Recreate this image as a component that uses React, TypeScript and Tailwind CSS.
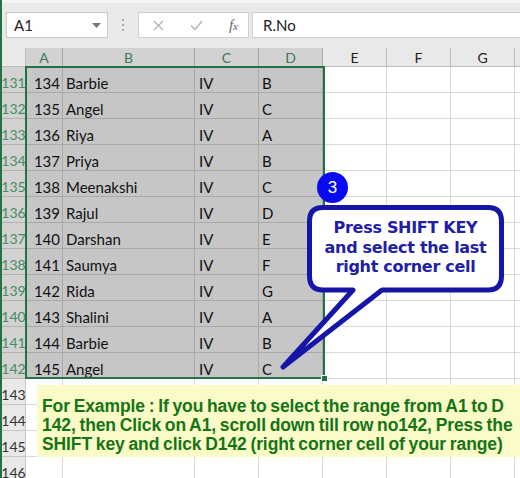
import React from "react";

const rows: [number, string, string, string, string][] = [
  [131, "134", "Barbie", "IV", "B"],
  [132, "135", "Angel", "IV", "C"],
  [133, "136", "Riya", "IV", "A"],
  [134, "137", "Priya", "IV", "B"],
  [135, "138", "Meenakshi", "IV", "C"],
  [136, "139", "Rajul", "IV", "D"],
  [137, "140", "Darshan", "IV", "E"],
  [138, "141", "Saumya", "IV", "F"],
  [139, "142", "Rida", "IV", "G"],
  [140, "143", "Shalini", "IV", "A"],
  [141, "144", "Barbie", "IV", "B"],
  [142, "145", "Angel", "IV", "C"],
  [143, "", "", "", ""],
  [144, "", "", "", ""],
  [145, "", "", "", ""],
  [146, "", "", "", ""],
];

const cols = ["A", "B", "C", "D", "E", "F", "G"];

function FormulaBar() {
  return (
    <div className="h-[48px] bg-[#e9e9e9] border-t-[3px] border-[#f4f4f4] flex items-start pt-[9px] pl-[4px]">
      {/* name box */}
      <div className="w-[102px] h-[26px] bg-white border border-[#c8c8c8] flex items-center justify-between pl-[7px] pr-[6px] text-[15px] text-[#222]">
        <span>A1</span>
        <svg width="9" height="5" viewBox="0 0 9 5">
          <path d="M0 0 H9 L4.5 5 Z" fill="#777" />
        </svg>
      </div>
      {/* grip dots */}
      <div className="w-[30px] h-[26px] flex flex-col items-center justify-center gap-[3px]">
        <span className="w-[2px] h-[2px] bg-[#aaa]" />
        <span className="w-[2px] h-[2px] bg-[#aaa]" />
        <span className="w-[2px] h-[2px] bg-[#aaa]" />
      </div>
      {/* cancel / enter / fx */}
      <div className="w-[111px] h-[26px] bg-white border border-[#d0d0d0] flex items-center pl-[14px] pr-[10px] justify-between">
        <svg width="11" height="11" viewBox="0 0 11 11">
          <path d="M1 1 L10 10 M10 1 L1 10" stroke="#b4b4b4" strokeWidth="1.3" />
        </svg>
        <svg width="13" height="11" viewBox="0 0 13 11">
          <path d="M1 5.5 L5 9.5 L12 1" stroke="#b4b4b4" strokeWidth="1.4" fill="none" />
        </svg>
        <span className="text-[15px] italic text-[#666] font-['Liberation_Serif',serif] leading-none">
          f<span className="text-[11px]">x</span>
        </span>
      </div>
      {/* formula input */}
      <div className="flex-1 ml-[3px] h-[26px] bg-white border border-[#d0d0d0] border-r-0 flex items-center pl-[10px] text-[15px] text-[#222]">
        R.No
      </div>
    </div>
  );
}

export default function App() {
  return (
    <div className="w-[520px] h-[478px] overflow-hidden relative border-l-2 border-[#217346] bg-white font-['Lato',sans-serif]">
      <FormulaBar />
      <div className="grid grid-cols-[24px_37px_132px_64px_64px_64px_64px_64px_1fr]">
        {/* header row */}
        <div className="h-[19px] bg-[#e9e9e9] border-r border-b border-[#bdbdbd]" />
        {cols.map((c, i) => (
          <div
            key={c}
            className={
              i < 4
                ? "h-[19px] bg-[#d2d2d2] text-[#3c7a55] border-r border-b border-[#a8a8a8] flex items-center justify-center text-[14px]"
                : "h-[19px] bg-[#e9e9e9] text-[#222] border-r border-b border-[#bdbdbd] flex items-center justify-center text-[14px]"
            }
          >
            {c}
          </div>
        ))}
        <div className="h-[19px] bg-[#e9e9e9] border-b border-[#bdbdbd]" />

        {rows.map(([n, a, b, c, d]) => {
          const sel = n <= 142;
          const cell = sel
            ? "h-[26px] bg-[#c6c6c6] border-r border-b border-[#a9a9a9] flex items-end pb-[1px] leading-[16px] text-[15px] text-[#111]"
            : "h-[26px] bg-white border-r border-b border-[#d9d9d9] flex items-end pb-[1px] leading-[16px] text-[15px] text-[#111]";
          const blank = "h-[26px] bg-white border-r border-b border-[#d9d9d9]";
          return (
            <React.Fragment key={n}>
              <div
                className={
                  sel
                    ? "h-[26px] bg-[#d2d2d2] text-[#4b8a63] border-r border-b border-[#b3b3b3] flex items-end pb-[1px] leading-[16px] justify-center text-[14px]"
                    : "h-[26px] bg-[#e9e9e9] text-[#333] border-r border-b border-[#c8c8c8] flex items-end pb-[1px] leading-[16px] justify-center text-[14px]"
                }
              >
                {n}
              </div>
              <div className={cell + " justify-end pr-[2px]"}>{a}</div>
              <div className={cell + " pl-[3px]"}>{b}</div>
              <div className={cell + " pl-[4px]"}>{c}</div>
              <div className={cell + " pl-[3px]"}>{d}</div>
              <div className={blank} />
              <div className={blank} />
              <div className={blank} />
              <div className="h-[26px] bg-white border-b border-[#d9d9d9]" />
            </React.Fragment>
          );
        })}
      </div>

      {/* selection outline */}
      <div className="absolute left-[23px] top-[66px] w-[300px] h-[313px] border-2 border-[#217346]" />
      <div className="absolute left-[319px] top-[375px] w-[7px] h-[7px] bg-[#217346] border border-white" />

      {/* callout bubble */}
      <svg className="absolute left-[268px] top-[195px]" width="245" height="185" viewBox="268 195 245 185">
        <path
          d="M321 207.5 H486 Q499.5 207.5 499.5 221 V276 Q499.5 290 486 290 H380 L281 367 L351 290 H321 Q307.5 290 307.5 276 V221 Q307.5 207.5 321 207.5 Z"
          fill="white"
          stroke="#1515a8"
          strokeWidth="5"
          strokeLinejoin="round"
        />
      </svg>
      <div className="absolute left-[307px] top-[218px] w-[193px] text-center text-[16px] leading-[19.5px] font-bold text-[#2020a6] font-['DejaVu_Sans',sans-serif] tracking-[-0.3px]">
        Press SHIFT KEY
        <br />
        and select the last
        <br />
        right corner cell
      </div>

      {/* step badge */}
      <div className="absolute left-[315px] top-[172px] w-[31px] h-[31px] rounded-full bg-[#0a0af2] text-white flex items-center justify-center text-[17px] font-['Liberation_Sans',sans-serif]">
        3
      </div>

      {/* note box */}
      <div className="absolute left-[35px] top-[385px] w-[483px] h-[72px] bg-[#fbfbc8] pl-[5px] pt-[12px] text-[17.5px] leading-[19px] font-bold text-[#157515] font-['Liberation_Sans',sans-serif] tracking-[-0.1px] [word-spacing:-1px] whitespace-nowrap">
        For Example : If you have to select the range from A1 to D
        <br />
        142, then Click on A1, scroll down till row no142, Press the
        <br />
        SHIFT key and click D142 (right corner cell of your range)
      </div>
    </div>
  );
}
